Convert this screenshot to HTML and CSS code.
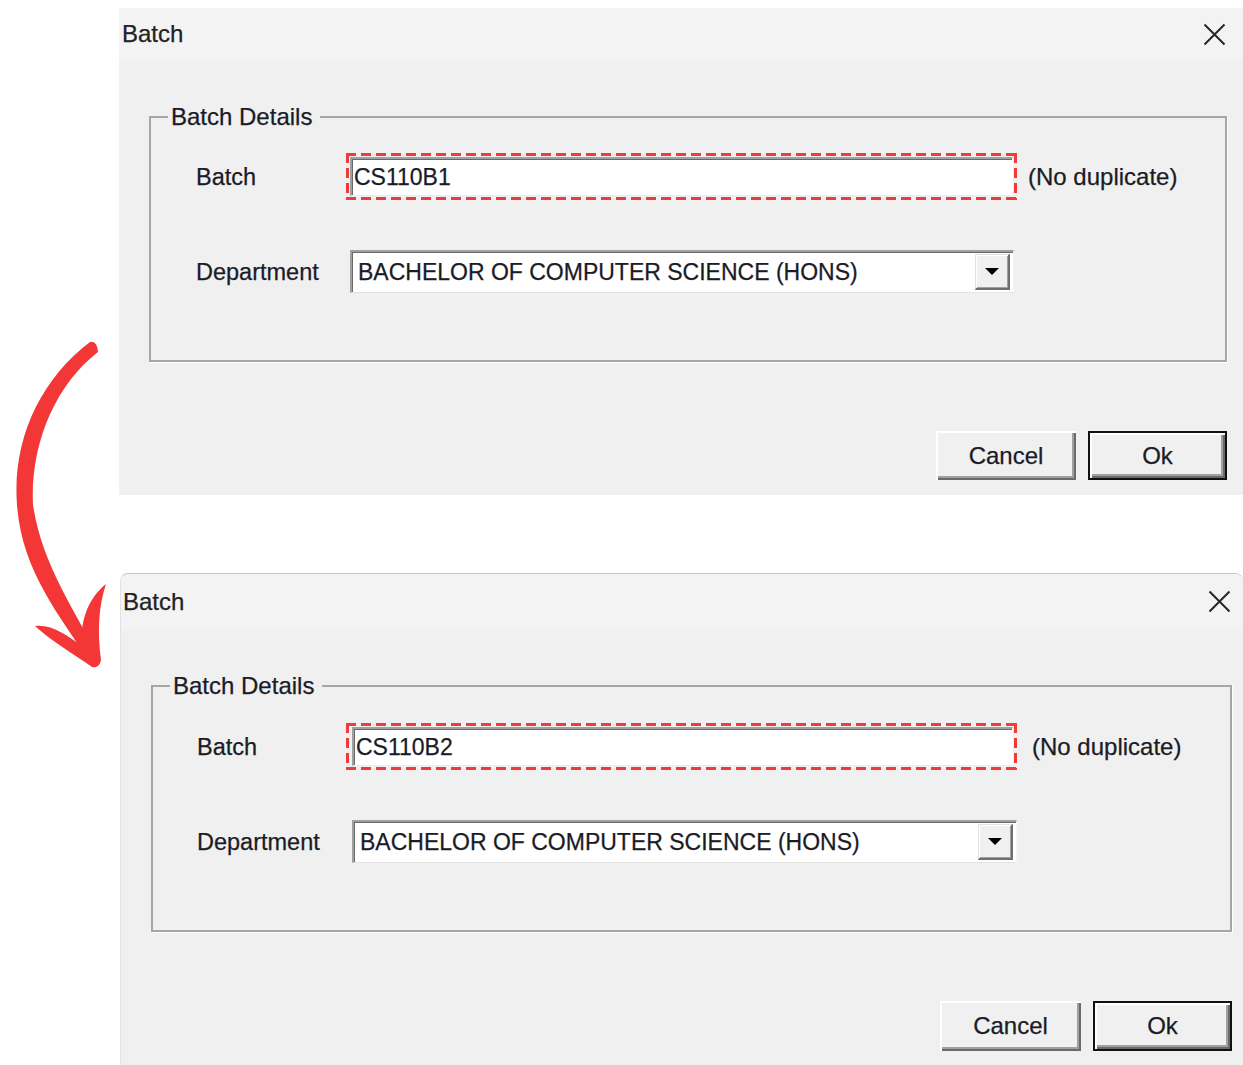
FILE: index.html
```html
<!DOCTYPE html>
<html lang="en">
<head>
<meta charset="utf-8">
<title>Batch</title>
<link rel="stylesheet" href="styles.css">
</head>
<body>
<div class="page">
  <svg class="arrow" viewBox="0 0 130 700" width="130" height="700" aria-hidden="true">
    <path class="arrow-ink" d="M 90 342 C 40 380, 12 440, 17 505 C 22 572, 60 615, 88 660 L 97 655 C 75 610, 42 565, 33 505 C 30 445, 55 385, 98 352 Q 97 340, 90 342 Z"/>
    <path class="arrow-ink" d="M 35 626 C 52 624, 68 636, 82 646 C 80 625, 86 600, 106 584 C 99 605, 97 630, 101 660 C 100 666, 96 668, 92 667 C 75 655, 50 640, 35 626 Z"/>
  </svg>

  <section class="dialog dialog--a">
    <header class="titlebar">
      <span class="title">Batch</span>
      <svg class="close" viewBox="0 0 23 23" aria-hidden="true"><path d="M1.5 1.5 L21.5 21.5 M21.5 1.5 L1.5 21.5"/></svg>
    </header>
    <div class="body">
      <fieldset class="group">
        <legend class="legend">Batch Details</legend>
        <div class="rows">
          <span class="lbl">Batch</span>
          <div class="focus"><div class="textbox">CS110B1</div></div>
          <span class="note">(No duplicate)</span>
          <span class="lbl">Department</span>
          <div class="combo">
            <span class="combo-text">BACHELOR OF COMPUTER SCIENCE (HONS)</span>
            <span class="combo-btn"><span class="tri"></span></span>
          </div>
          <span></span>
        </div>
      </fieldset>
      <div class="actions">
        <button class="btn btn--cancel">Cancel</button>
        <button class="btn btn--default">Ok</button>
      </div>
    </div>
  </section>

  <section class="dialog dialog--b">
    <header class="titlebar">
      <span class="title">Batch</span>
      <svg class="close" viewBox="0 0 23 23" aria-hidden="true"><path d="M1.5 1.5 L21.5 21.5 M21.5 1.5 L1.5 21.5"/></svg>
    </header>
    <div class="body">
      <fieldset class="group">
        <legend class="legend">Batch Details</legend>
        <div class="rows">
          <span class="lbl">Batch</span>
          <div class="focus"><div class="textbox">CS110B2</div></div>
          <span class="note">(No duplicate)</span>
          <span class="lbl">Department</span>
          <div class="combo">
            <span class="combo-text">BACHELOR OF COMPUTER SCIENCE (HONS)</span>
            <span class="combo-btn"><span class="tri"></span></span>
          </div>
          <span></span>
        </div>
      </fieldset>
      <div class="actions">
        <button class="btn btn--cancel">Cancel</button>
        <button class="btn btn--default">Ok</button>
      </div>
    </div>
  </section>
</div>
</body>
</html>
```

FILE: styles.css
```css
* { box-sizing: border-box; }

html, body {
  margin: 0;
  background: #ffffff;
}

body {
  font-family: "Liberation Sans", Arial, sans-serif;
  color: #1b1b26;
  -webkit-text-stroke: 0.25px currentColor;
}

.page {
  position: relative;
  height: 1065px;
  overflow: hidden;
  padding: 8px 0 0 119px;
}

.arrow {
  position: absolute;
  left: 0;
  top: 0;
  width: 130px;
  height: 700px;
}

.arrow-ink { fill: #f33636; }

/* ---------- dialog ---------- */
.dialog {
  width: 1124px;
  background: #f0f0f0;
}

.dialog--a { height: 487px; }

.dialog--b {
  width: 1123px;
  height: 492px;
  margin: 78px 0 0 1px;
  border-top: 1px solid #c4c4c4;
  border-left: 1px solid #e2e2e2;
  border-radius: 8px 8px 0 0;
  overflow: hidden;
}

.titlebar {
  height: 52px;
  background: #f3f3f3;
  display: flex;
  align-items: center;
  justify-content: space-between;
  padding: 0 17px 0 3px;
}

.dialog--b .titlebar {
  height: 55px;
  padding: 0 12px 0 2px;
}

.title {
  font-size: 24px;
  color: #222222;
  line-height: 28px;
}

.close {
  width: 23px;
  height: 23px;
  fill: none;
  stroke: #262626;
  stroke-width: 2;
}

.body { padding: 43px 16px 0 30px; }

.dialog--b .body { padding: 43px 11px 0 30px; }

/* ---------- group box ---------- */
.group {
  margin: 0;
  padding: 0;
  min-width: 0;
  border: 2px solid #a6a6a6;
  box-shadow: 1px 1px 0 #ffffff;
}

.legend {
  margin-left: 17px;
  padding: 0 8px 0 3px;
  font-size: 24px;
  line-height: 28px;
}

.rows {
  display: grid;
  grid-template-columns: 150px 671px auto;
  row-gap: 50px;
  align-items: center;
  padding: 22px 0 67px 45px;
}

.dialog--b .rows {
  grid-template-columns: 149px 671px auto;
  padding: 23px 0 67px 44px;
}

.lbl {
  font-size: 23.5px;
  line-height: 28px;
}

.note {
  margin-left: 11px;
  font-size: 24px;
  line-height: 28px;
}

.dialog--b .note { margin-left: 15px; }

/* red dashed focus highlight */
.focus {
  height: 47px;
  padding: 4px;
  background:
    repeating-linear-gradient(90deg, #f03b3b 0 10px, transparent 10px 15px) top left / 100% 3px no-repeat,
    repeating-linear-gradient(90deg, #f03b3b 0 10px, transparent 10px 15px) bottom left / 100% 3px no-repeat,
    repeating-linear-gradient(180deg, #f03b3b 0 10px, transparent 10px 15px) top left / 3px 100% no-repeat,
    repeating-linear-gradient(180deg, #f03b3b 0 10px, transparent 10px 15px) top right / 3px 100% no-repeat;
}

.dialog--b .focus { padding: 4px 4px 4px 6px; }

.textbox {
  height: 100%;
  background: #ffffff;
  border-top: 2px solid #a0a0a0;
  border-left: 2px solid #a0a0a0;
  border-right: 1px solid #ffffff;
  border-bottom: 1px solid #ececec;
  box-shadow: inset 1px 1px 0 #696969;
  padding-left: 2px;
  font-size: 23px;
  line-height: 36px;
}

/* combo box */
.combo {
  width: 664px;
  height: 43px;
  margin-left: 4px;
  display: flex;
  align-items: stretch;
  background: #ffffff;
  border-top: 2px solid #a0a0a0;
  border-left: 2px solid #a0a0a0;
  border-right: 1px solid #f6f6f6;
  border-bottom: 1px solid #e3e3e3;
  box-shadow: inset 1px 1px 0 #696969;
  padding: 2px 3px 2px 0;
}

.dialog--b .combo {
  width: 665px;
  margin-left: 6px;
}

.combo-text {
  flex: 1;
  padding-left: 6px;
  font-size: 23px;
  line-height: 36px;
  white-space: nowrap;
}

.combo-btn {
  width: 35px;
  display: flex;
  align-items: center;
  justify-content: center;
  background: #f0f0f0;
  border-top: 1px solid #e3e3e3;
  border-left: 1px solid #e3e3e3;
  border-right: 2px solid #6f6f6f;
  border-bottom: 2px solid #6f6f6f;
  box-shadow: inset 1px 1px 0 #ffffff, inset -1px -1px 0 #a0a0a0;
}

.tri {
  width: 0;
  height: 0;
  border-left: 7px solid transparent;
  border-right: 7px solid transparent;
  border-top: 7px solid #000000;
}

/* ---------- buttons ---------- */
.actions {
  display: flex;
  justify-content: flex-end;
  gap: 12px;
  margin-top: 69px;
}

.btn {
  height: 49px;
  margin: 0;
  padding: 0;
  font: inherit;
  font-size: 24px;
  color: #1b1b26;
  background: #f0f0f0;
  border: none;
  box-shadow:
    inset 2px 2px 0 #ffffff,
    inset -2px -2px 0 #6a6a6a,
    inset -4px -4px 0 #a0a0a0;
}

.btn--cancel { width: 140px; }

.btn--default {
  width: 139px;
  border: 2px solid #111111;
}

.dialog--b .btn { height: 50px; }
.dialog--b .btn--cancel { width: 141px; }
```
